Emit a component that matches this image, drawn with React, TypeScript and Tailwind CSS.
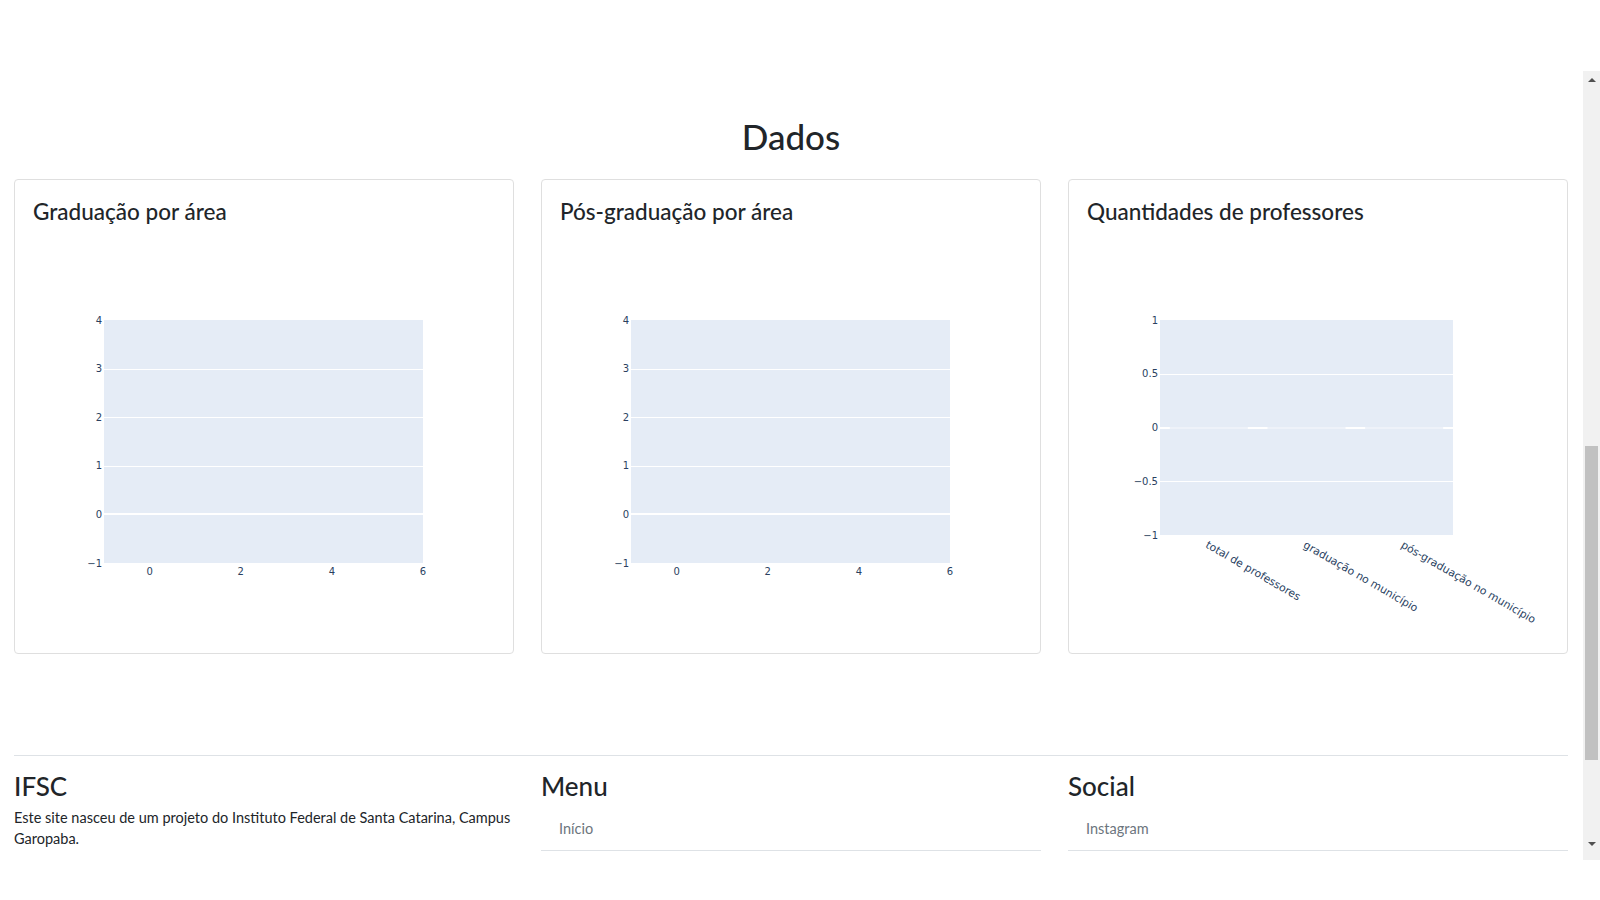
const TICK = '#2a3f5f';
const PLOT_BG = '#e5ecf6';
const tickFont = { fontFamily: "'DejaVu Sans', Verdana, sans-serif", fontSize: 10 };
const catFont = { fontFamily: "'DejaVu Sans', Verdana, sans-serif", fontSize: 10.8 };

const crisp = (y: number) => Math.round(y) + 0.5;
const minus = (v: number) => (v < 0 ? `\u2212${-v}` : `${v}`);

// plotly style chart with numeric axes (empty data)
const NumericChart = () => {
  const yPos = (v: number) => 91 + (4 - v) * 48.6;
  const xPos = (v: number) => 73 + (v + 1) * 45.57;
  return (
    <svg width="465" height="407" className="-ml-[2px] mt-[3px] block">
      <rect x={73} y={91} width={319} height={243} fill={PLOT_BG} />
      {[3, 2, 1].map((v) => (
        <line key={v} x1={73} x2={392} y1={crisp(yPos(v))} y2={crisp(yPos(v))} stroke="#fff" strokeWidth={1} />
      ))}
      <line x1={73} x2={392} y1={Math.round(yPos(0))} y2={Math.round(yPos(0))} stroke="#fff" strokeWidth={2} />
      {[4, 3, 2, 1, 0, -1].map((v) => (
        <text key={v} x={71} y={yPos(v) + 3.6} textAnchor="end" fill={TICK} style={tickFont}>
          {minus(v)}
        </text>
      ))}
      {[0, 2, 4, 6].map((v) => (
        <text key={v} x={xPos(v)} y={345.5} textAnchor="middle" fill={TICK} style={tickFont}>
          {v}
        </text>
      ))}
    </svg>
  );
};

const categories = ['total de professores', 'graduação no município', 'pós-graduação no município'];

const CategoryChart = () => {
  const yPos = (v: number) => 91 + (1 - v) * 107.5;
  const band = 293 / 3;
  return (
    <svg width="465" height="407" className="-ml-[2px] mt-[3px] block">
      <rect x={75} y={91} width={293} height={215} fill={PLOT_BG} />
      {[0.5, -0.5].map((v) => (
        <line key={v} x1={75} x2={368} y1={crisp(yPos(v))} y2={crisp(yPos(v))} stroke="#fff" strokeWidth={1} />
      ))}
      <line x1={75} x2={368} y1={Math.round(yPos(0))} y2={Math.round(yPos(0))} stroke="#fff" strokeWidth={2} />
      {categories.map((c, i) => {
        const cx = 75 + band * i + band / 2;
        return <rect key={c} x={cx - 39} y={Math.round(yPos(0)) - 1} width={78} height={2} fill="#eef2f9" />;
      })}
      {[1, 0.5, 0, -0.5, -1].map((v) => (
        <text key={v} x={73} y={yPos(v) + 3.6} textAnchor="end" fill={TICK} style={tickFont}>
          {minus(v)}
        </text>
      ))}
      {categories.map((c, i) => {
        const cx = 75 + band * i + band / 2;
        return (
          <text key={c} transform={`translate(${cx - 4},${318}) rotate(30)`} fill={TICK} style={catFont}>
            {c}
          </text>
        );
      })}
    </svg>
  );
};

const cards = [
  { title: 'Graduação por área', chart: <NumericChart /> },
  { title: 'Pós-graduação por área', chart: <NumericChart /> },
  { title: 'Quantidades de professores', chart: <CategoryChart /> },
];

const Scrollbar = () => (
  <div className="w-[17px] shrink-0 pt-[71px]">
    <div className="flex h-[789px] flex-col items-center bg-[#f1f1f1]">
      <div className="mt-[7px] h-0 w-0 border-x-[4px] border-b-[4px] border-x-transparent border-b-[#505050]" />
      <div className="mt-[364px] h-[314px] w-[13px] bg-[#c1c1c1]" />
      <div className="mt-[82px] h-0 w-0 border-x-[4px] border-t-[4px] border-x-transparent border-t-[#505050]" />
    </div>
  </div>
);

export default function App() {
  return (
    <div className="flex h-[900px] w-full overflow-hidden bg-white font-['Lato',sans-serif] text-[#212529]">
      <main className="flex-1 pl-[14px] pr-[15px] pt-[117px]">
        <h2 className="h-[38px] text-center text-[35px] font-medium leading-[38px]">Dados</h2>

        {/* Charts */}
        <div className="mt-[24px] grid grid-cols-3 gap-[27px]">
          {cards.map((card) => (
            <div key={card.title} className="h-[475px] rounded-[4px] border border-[#dfdfdf] bg-white pb-4 pl-[18px] pr-4 pt-[17px]">
              <h4 className="h-[29px] text-[22.5px] font-medium leading-[29px]">{card.title}</h4>
              {card.chart}
            </div>
          ))}
        </div>

        {/* Footer */}
        <footer className="mt-[101px] border-t border-[#dee2e6] pt-[13px]">
          <div className="grid grid-cols-3 gap-[27px]">
            <div>
              <h3 className="h-[34px] text-[26px] font-medium leading-[34px]">IFSC</h3>
              <p className="mt-[4px] text-[14.5px] leading-[21px]">
                Este site nasceu de um projeto do Instituto Federal de Santa Catarina, Campus Garopaba.
              </p>
            </div>
            <div>
              <h3 className="h-[34px] text-[26px] font-medium leading-[34px]">Menu</h3>
              <ul className="mt-[5px]">
                <li className="border-b border-[#dee2e6] pb-[11px] pl-[18px] pr-4 pt-[10px] text-[14.5px] leading-[21px] text-[#6c757d]">Início</li>
              </ul>
            </div>
            <div>
              <h3 className="h-[34px] text-[26px] font-medium leading-[34px]">Social</h3>
              <ul className="mt-[5px]">
                <li className="border-b border-[#dee2e6] pb-[11px] pl-[18px] pr-4 pt-[10px] text-[14.5px] leading-[21px] text-[#6c757d]">Instagram</li>
              </ul>
            </div>
          </div>
        </footer>
      </main>
      <Scrollbar />
    </div>
  );
}
